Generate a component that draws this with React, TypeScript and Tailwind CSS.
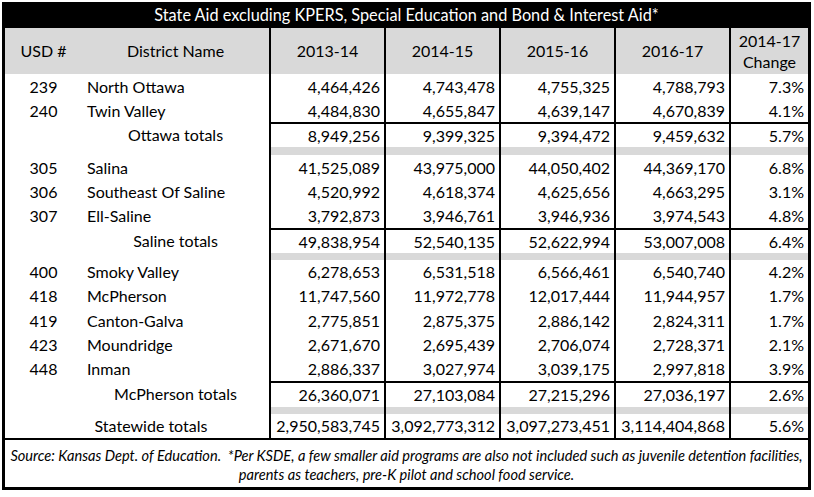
import React from "react";

type Row = {
  usd: string;
  name: string;
  v: string[];
  ch: string;
  h: string;
};

const NumCells = ({ v, ch, top }: { v: string[]; ch: string; top?: boolean }) => (
  <>
    {v.map((x, i) => (
      <div
        key={i}
        className={`w-[115px] h-full flex items-center justify-end pr-[4px] border-l-2 border-black ${top ? "border-t-2" : ""}`}
      >
        {x}
      </div>
    ))}
    <div
      className={`w-[79px] h-full flex items-center justify-end pr-[4px] border-l-2 border-black ${top ? "border-t-2" : ""}`}
    >
      {ch}
    </div>
  </>
);

const DataRow = ({ r }: { r: Row }) => (
  <div className={`flex ${r.h}`}>
    <div className="w-[77px] flex items-center justify-center">{r.usd}</div>
    <div className="w-[187px] flex items-center pl-[5px]">{r.name}</div>
    <NumCells v={r.v} ch={r.ch} />
  </div>
);

const TotalRow = ({
  label,
  v,
  ch,
  h,
  top = true,
  shift = "",
}: {
  label: string;
  v: string[];
  ch: string;
  h: string;
  top?: boolean;
  shift?: string;
}) => (
  <div className={`flex ${h}`}>
    <div className="w-[77px]" />
    <div className={`w-[187px] flex items-center justify-center ${shift}`}>{label}</div>
    <NumCells v={v} ch={ch} top={top} />
  </div>
);

const GrayBand = ({ h }: { h: string }) => (
  <div className={`flex ${h}`}>
    <div className="w-[264px]" />
    <div className="w-[115px] bg-[#d9d9d9] border-l-2 border-black" />
    <div className="w-[115px] bg-[#d9d9d9] border-l-2 border-black" />
    <div className="w-[115px] bg-[#d9d9d9] border-l-2 border-black" />
    <div className="w-[115px] bg-[#d9d9d9] border-l-2 border-black" />
    <div className="w-[79px] bg-[#d9d9d9] border-l-2 border-black" />
  </div>
);

export default function App() {
  const ottawa: Row[] = [
    { usd: "239", name: "North Ottawa", v: ["4,464,426", "4,743,478", "4,755,325", "4,788,793"], ch: "7.3%", h: "h-[25px]" },
    { usd: "240", name: "Twin Valley", v: ["4,484,830", "4,655,847", "4,639,147", "4,670,839"], ch: "4.1%", h: "h-[23px]" },
  ];
  const saline: Row[] = [
    { usd: "305", name: "Salina", v: ["41,525,089", "43,975,000", "44,050,402", "44,369,170"], ch: "6.8%", h: "h-[25px]" },
    { usd: "306", name: "Southeast Of Saline", v: ["4,520,992", "4,618,374", "4,625,656", "4,663,295"], ch: "3.1%", h: "h-[24px]" },
    { usd: "307", name: "Ell-Saline", v: ["3,792,873", "3,946,761", "3,946,936", "3,974,543"], ch: "4.8%", h: "h-[24px]" },
  ];
  const mcp: Row[] = [
    { usd: "400", name: "Smoky Valley", v: ["6,278,653", "6,531,518", "6,566,461", "6,540,740"], ch: "4.2%", h: "h-[24px]" },
    { usd: "418", name: "McPherson", v: ["11,747,560", "11,972,778", "12,017,444", "11,944,957"], ch: "1.7%", h: "h-[24px]" },
    { usd: "419", name: "Canton-Galva", v: ["2,775,851", "2,875,375", "2,886,142", "2,824,311"], ch: "1.7%", h: "h-[25px]" },
    { usd: "423", name: "Moundridge", v: ["2,671,670", "2,695,439", "2,706,074", "2,728,371"], ch: "2.1%", h: "h-[24px]" },
    { usd: "448", name: "Inman", v: ["2,886,337", "3,027,974", "3,039,175", "2,997,818"], ch: "3.9%", h: "h-[24px]" },
  ];

  return (
    <div className="w-[814px] h-[497px] bg-white pt-[2px] pl-[2px] font-['Lato',sans-serif] text-[16px] text-black leading-none">
      <div className="w-[809px] border-x-[3px] border-b-[3px] border-black">
        <div className="h-[26px] bg-black text-white text-[16.3px] flex items-center justify-center -mx-[3px] w-[809px]">
          State Aid excluding KPERS, Special Education and Bond &amp; Interest Aid*
        </div>
        <div className="flex h-[46px] bg-[#d9d9d9]">
          <div className="w-[77px] flex items-center justify-center">USD #</div>
          <div className="w-[187px] flex items-center justify-center">District Name</div>
          {["2013-14", "2014-15", "2015-16", "2016-17"].map((y) => (
            <div key={y} className="w-[115px] flex items-center justify-center border-l-2 border-black">
              {y}
            </div>
          ))}
          <div className="w-[79px] flex flex-col items-center justify-center border-l-2 border-black leading-[21px]">
            <span>2014-17</span>
            <span>Change</span>
          </div>
        </div>
        {ottawa.map((r) => (
          <DataRow key={r.usd} r={r} />
        ))}
        <TotalRow label="Ottawa totals" v={["8,949,256", "9,399,325", "9,394,472", "9,459,632"]} ch="5.7%" h="h-[25px]" />
        <GrayBand h="h-[8px]" />
        {saline.map((r) => (
          <DataRow key={r.usd} r={r} />
        ))}
        <TotalRow label="Saline totals" v={["49,838,954", "52,540,135", "52,622,994", "53,007,008"]} ch="6.4%" h="h-[25px]" />
        <GrayBand h="h-[7px]" />
        {mcp.map((r) => (
          <DataRow key={r.usd} r={r} />
        ))}
        <TotalRow label="McPherson totals" v={["26,360,071", "27,103,084", "27,215,296", "27,036,197"]} ch="2.6%" h="h-[26px]" />
        <GrayBand h="h-[7px]" />
        <TotalRow
          label="Statewide totals"
          v={["2,950,583,745", "3,092,773,312", "3,097,273,451", "3,114,404,868"]}
          ch="5.6%"
          h="h-[24px]"
          top={false}
          shift="pr-[49px]"
        />
        <div className="h-[49px] border-t-2 border-black pt-[6px] text-center italic text-[14.6px] leading-[19px] whitespace-nowrap">
          <div>
            Source: Kansas Dept. of Education.&nbsp;&nbsp;*Per KSDE, a few smaller aid programs are also not included such as juvenile detention facilities,
          </div>
          <div>parents as teachers, pre-K pilot and school food service.</div>
        </div>
      </div>
    </div>
  );
}
